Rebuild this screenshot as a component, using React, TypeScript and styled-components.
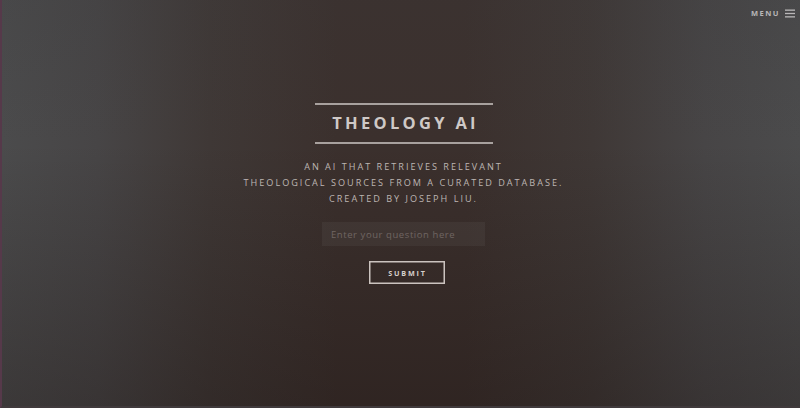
import React from "react";
import styled, { createGlobalStyle } from "styled-components";

const Global = createGlobalStyle`
  html, body { margin: 0; padding: 0; background: #2e2624; }
  body { font-family: "Open Sans", "Liberation Sans", sans-serif; }
  * { box-sizing: border-box; }
`;

const Page = styled.div`
  width: 800px;
  height: 408px;
  display: flex;
  flex-direction: column;
  overflow: hidden;
  background:
    linear-gradient(to bottom, rgba(60,60,62,0.18) 0%, rgba(0,0,0,0) 35%, rgba(18,8,6,0.28) 100%),
    linear-gradient(to right, #4b4b4c 0%, #474546 12%, #3f3836 26%, #3b302d 42%, #3b302d 58%, #3f3836 74%, #474546 88%, #4b4b4c 100%);
  border-left: 2px solid #56394a;
  border-bottom: 2px solid #403a3c;
`;

const Header = styled.header`
  height: 26px;
  display: flex;
  justify-content: flex-end;
  align-items: center;
  padding-right: 5px;
  gap: 5px;
`;

const MenuLabel = styled.span`
  font-size: 7.5px;
  font-weight: 700;
  letter-spacing: 0.2em;
  color: #b9b7b8;
  text-transform: uppercase;
`;

const Burger = styled.svg`
  width: 10px;
  height: 9px;
  display: block;
`;

const Main = styled.main`
  flex: 1;
  display: flex;
  flex-direction: column;
  align-items: center;
  padding: 77px 0 0 5px;
`;

const Title = styled.h1`
  margin: 0;
  width: 178px;
  border-top: 2px solid #a8a19e;
  border-bottom: 2px solid #a8a19e;
  padding: 9px 0 10px 4px;
  text-align: center;
  font-size: 16.5px;
  line-height: 18px;
  font-weight: 700;
  letter-spacing: 0.2em;
  color: #cfc9c6;
  text-transform: uppercase;
`;

const Lead = styled.p`
  margin: 15px 0 0;
  text-align: center;
  font-size: 9.1px;
  line-height: 16px;
  letter-spacing: 0.22em;
  color: #bdb6b3;
  text-transform: uppercase;
`;

const Form = styled.form`
  margin-top: 15px;
  display: flex;
  flex-direction: column;
  align-items: center;
  gap: 15px;
`;

const Input = styled.input`
  width: 163px;
  height: 24px;
  border: none;
  outline: none;
  background: rgba(255, 255, 255, 0.045);
  padding: 0 9px;
  font-family: "Open Sans", "Liberation Sans", sans-serif;
  font-size: 9.5px;
  letter-spacing: 0.06em;
  color: #d0c8c4;
  &::placeholder { color: #6f6562; }
`;

const Button = styled.button`
  width: 76px;
  height: 23px;
  margin-left: 6px;
  background: transparent;
  border: 1px solid #cbc3bf;
  box-shadow: inset 0 0 0 0.5px #cbc3bf;
  font-family: "Open Sans", "Liberation Sans", sans-serif;
  font-size: 7.2px;
  font-weight: 700;
  letter-spacing: 0.25em;
  padding: 0 0 0 2px;
  color: #d6cfcb;
  text-transform: uppercase;
  cursor: pointer;
`;

export default function App() {
  return (
    <>
      <Global />
      <Page>
        <Header>
          <MenuLabel>Menu</MenuLabel>
          <Burger viewBox="0 0 10 9" aria-hidden>
            <rect x="0" y="0.5" width="10" height="1.3" fill="#b9b7b8" />
            <rect x="0" y="3.85" width="10" height="1.3" fill="#b9b7b8" />
            <rect x="0" y="7.2" width="10" height="1.3" fill="#b9b7b8" />
          </Burger>
        </Header>
        <Main>
          <Title>Theology AI</Title>
          <Lead>
            An AI that retrieves relevant
            <br />
            theological sources from a curated database.
            <br />
            Created by Joseph Liu.
          </Lead>
          <Form onSubmit={(e) => e.preventDefault()}>
            <Input type="text" placeholder="Enter your question here" />
            <Button type="submit">Submit</Button>
          </Form>
        </Main>
      </Page>
    </>
  );
}
